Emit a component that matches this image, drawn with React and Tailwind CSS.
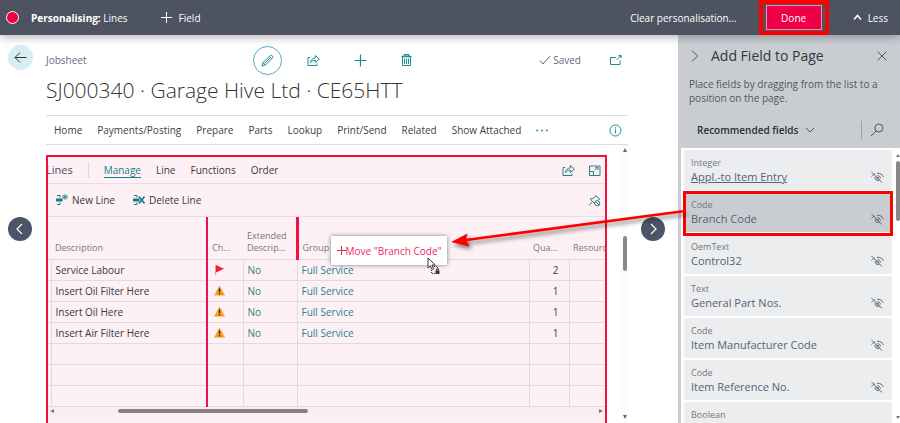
const FIELDS = [
  { type: 'Integer', name: 'Appl.-to Item Entry', underlined: true },
  { type: 'Code', name: 'Branch Code', selected: true },
  { type: 'OemText', name: 'Control32' },
  { type: 'Text', name: 'General Part Nos.' },
  { type: 'Code', name: 'Item Manufacturer Code' },
  { type: 'Code', name: 'Item Reference No.' },
  { type: 'Boolean', name: '' },
];

const ROWS = [
  { description: 'Service Labour', status: 'flag', extended: 'No', group: 'Full Service', qty: '2' },
  { description: 'Insert Oil Filter Here', status: 'warn', extended: 'No', group: 'Full Service', qty: '1' },
  { description: 'Insert Oil Here', status: 'warn', extended: 'No', group: 'Full Service', qty: '1' },
  { description: 'Insert Air Filter Here', status: 'warn', extended: 'No', group: 'Full Service', qty: '1' },
  {},
  {},
  {},
];

const MENU = ['Home', 'Payments/Posting', 'Prepare', 'Parts', 'Lookup', 'Print/Send', 'Related', 'Show Attached'];

function Icon({ size = 12, width = 1, className = '', children }) {
  return (
    <svg
      width={size}
      height={size}
      viewBox={`0 0 ${size} ${size}`}
      fill="none"
      stroke="currentColor"
      strokeWidth={width}
      className={`shrink-0 ${className}`}
      aria-hidden="true"
    >
      {children}
    </svg>
  );
}

const ShareIcon = () => (
  <Icon size={13}>
    <path d="M3 3.500H1v8h9V9.500" />
    <path d="M3.500 8.500C3.700 5.800 5.500 4.200 8.300 4V1.500l4 3.500-4 3.500V6.200C6.200 6.200 4.800 7 3.500 8.500z" />
  </Icon>
);

const HiddenIcon = () => (
  <Icon size={13} className="text-[#5f6a7b]">
    <path d="M0.500 5.500C2 3.600 3.500 3 4 2.800M6 2.300C9 2 11.500 3.500 12.500 6" />
    <path d="M0.500 1l10.500 10.500" />
    <path d="M4.500 5.500C3.700 7 4.200 9 6.300 9.500c1 .2 1.800-.1 2.500-.7M6.500 4.600c1.700-.1 3 1.200 2.800 3" />
    <circle cx="6.800" cy="7" r="0.900" />
  </Icon>
);

const PopOutIcon = () => (
  <Icon size={13}>
    <path d="M7 3.500H1.500v7h9.500V6.500" />
    <path d="M7.500 6l4-4" />
    <path d="M9 1h3.500v3.500z" fill="currentColor" stroke="none" />
  </Icon>
);

const ExpandIcon = () => (
  <Icon size={13}>
    <path d="M1.500 11.500v-9.500h10.500v9.500z" />
    <path d="M1.500 7.500h4v4M6.500 6l3.500-3M7.500 3.500h2.500v2.500" />
  </Icon>
);

const UnpinIcon = () => (
  <Icon size={13}>
    <path d="M7.500 1.500l4.500 4M8 2L5 4.500 2 5l5 5M11.500 5L10 6.500M4.500 7.500L1 11.500" />
    <circle cx="9.200" cy="9.300" r="2.600" />
    <path d="M7.500 7.500l3.500 3.500" />
  </Icon>
);

const RowMark = () => (
  <>
    <path d="M1 1.500h3v2M1 10.500h3v-2" />
    <path d="M0 4.500h6.500v3H0z" fill="currentColor" stroke="none" />
  </>
);

const NewLineIcon = () => (
  <Icon size={12}>
    <RowMark />
    <path d="M9 0v6M6.500 1l5 4M11.500 1l-5 4M6 3h6" strokeWidth="0.800" />
  </Icon>
);

const DeleteLineIcon = () => (
  <Icon size={12}>
    <RowMark />
    <path d="M6 2.500l5.500 7M11.500 2.500L6 9.500" strokeWidth="1.600" />
  </Icon>
);

const Status = ({ kind }) =>
  kind === 'flag' ? (
    <svg width="11" height="11" viewBox="0 0 11 11" className="block" role="img" aria-label="Flag">
      <path d="M1.500 1v10" stroke="#e99aa5" />
      <path d="M2 1l8 3.700L2 8.500z" fill="#f0232c" />
    </svg>
  ) : (
    <svg width="11" height="11" viewBox="0 0 11 11" className="block" role="img" aria-label="Warning">
      <path d="M5.500 0.500L11 10.500H0z" fill="#f9a01b" />
      <path d="M5.500 3.500v3.700M5.500 8v1.500" stroke="#3b2a20" strokeWidth="1.400" />
    </svg>
  );

function TopBar() {
  return (
    <header className="relative z-10 flex h-[35px] shrink-0 items-center bg-[#4d5360] pl-1.5 pr-3 text-white shadow-[0_2px_9px_rgba(0,0,0,0.3)]">
      <span className="h-[13px] w-[13px] rounded-full border border-white bg-[#ee0046]" />
      <p className="ml-3">
        <strong className="font-bold">Personalising:</strong> Lines
      </p>
      <button className="ml-8 flex items-center gap-1.5">
        <Icon size={13}>
          <path d="M6.500 1v11M1 6.500h11" />
        </Icon>
        Field
      </button>
      <button className="ml-auto">Clear personalisation...</button>
      <div className="ml-[22px] flex h-[35px] items-center border-4 border-[#fe0000] px-[3px]">
        <button className="h-[25px] w-14 border border-[#f58fb0] bg-[#ee0046]">Done</button>
      </div>
      <button className="ml-6 flex items-center gap-1.5">
        <Icon size={9} width={1.5}>
          <path d="M1 6.500l3.500-4 3.500 4" />
        </Icon>
        Less
      </button>
    </header>
  );
}

function RecordHeader() {
  return (
    <>
      <div className="relative flex h-[50px] items-center pr-1.5 text-[#5f6b80]">
        <span>Jobsheet</span>
        <div className="absolute left-[207px] flex items-center gap-[34px] text-[#1b8f96]">
          <button aria-label="Edit" className="-mr-[9px] grid h-[29px] w-[29px] place-items-center rounded-full border border-[#4fb0b8]">
            <Icon size={13}>
              <path d="M1 12l1-3.500L9.500 1.500c1-.8 3.200 1 2.200 2.200L4.500 11 1 12zM2 8.500L4.500 11M8.500 2.500l2.300 2.300M3.700 9.300l5.300-5.300" />
            </Icon>
          </button>
          <button aria-label="Share"><ShareIcon /></button>
          <button aria-label="New">
            <Icon size={13} width={1.2}>
              <path d="M6.500 0.500v12M0.500 6.500h12" />
            </Icon>
          </button>
          <button aria-label="Delete">
            <Icon size={12}>
              <path d="M0.500 2.500h10M3.500 2V0.700h4V2" strokeWidth="1.300" />
              <path d="M1.500 3v8.500h8V3" />
              <path d="M3.500 4.500v5.500M5.500 4.500v5.500M7.500 4.500v5.500" />
            </Icon>
          </button>
        </div>
        <span className="ml-auto flex items-center gap-0.5">
          <Icon size={12}>
            <path d="M1 6.500l3 3.500 7-8" />
          </Icon>
          Saved
        </span>
        <button aria-label="Open in new window" className="ml-7 text-[#1b8f96]"><PopOutIcon /></button>
      </div>
      <h1 className="h-[30px] whitespace-nowrap text-[21px] leading-[10px] font-light text-[#333]">
        SJ000340 · Garage Hive Ltd · CE65HTT
      </h1>
      <nav className="flex h-[30px] items-center gap-[15px] border-y border-[#dcdcdc] pl-2 pr-1.5 text-[#404040]">
        {MENU.map((label) => (
          <button key={label} className="whitespace-nowrap">{label}</button>
        ))}
        <button aria-label="More" className="text-[#1b8f96]">
          <svg width="12" height="3" viewBox="0 0 12 3" fill="currentColor" aria-hidden="true">
            <circle cx="1.200" cy="1.500" r="0.900" />
            <circle cx="6" cy="1.500" r="0.900" />
            <circle cx="10.800" cy="1.500" r="0.900" />
          </svg>
        </button>
        <button aria-label="Information" className="ml-auto text-[#1b8f96]">
          <Icon size={13}>
            <circle cx="6.500" cy="6.500" r="5.500" />
            <path d="M6.500 5.500v4M6.500 3.300v1.200" />
          </Icon>
        </button>
      </nav>
    </>
  );
}

function LinesTable() {
  return (
    <table className="w-full table-fixed border-collapse text-left">
      <colgroup>
        <col className="w-[3px]" />
        <col className="w-[156px]" />
        <col className="w-9" />
        <col className="w-[54px]" />
        <col />
        <col className="w-10" />
        <col className="w-9" />
      </colgroup>
      <thead>
        <tr className="h-[42px] align-bottom text-[9px] leading-3 whitespace-nowrap text-[#7b7580] *:pb-[5px] *:font-normal">
          <td />
          <th className="pl-1">Description</th>
          <th className="border-l-2 border-[#e8134f] pl-1">Ch...</th>
          <th className="pl-1">Extended<br />Descrip...</th>
          <th className="border-l-3 border-[#f3103f] pl-1">Group D</th>
          <th className="pl-1">Qua...</th>
          <th className="overflow-hidden pl-1">Resourc</th>
        </tr>
      </thead>
      <tbody>
        {ROWS.map((row, i) => (
          <tr key={i} className="h-[21px] border-y border-[#e6d9de] text-[#40363c] *:border-l *:border-[#e6d9de] *:py-0">
            <td className="border-l-0!" />
            <td className="pl-1">{row.description}</td>
            <td className="border-l-2! border-l-[#e8134f]! pl-1.5">{row.status && <Status kind={row.status} />}</td>
            <td className="pl-1 text-[#2b7f88]">{row.extended}</td>
            <td className="pl-1 text-[#2b7f88]">{row.group}</td>
            <td className="pr-2.5 text-right">{row.qty}</td>
            <td />
          </tr>
        ))}
      </tbody>
    </table>
  );
}

function LinesPart() {
  return (
    <section className="flex min-w-0 flex-1 flex-col overflow-hidden border-2 border-b-0 border-[#f3103f] bg-[#fef1f5] text-[#40363c]">
      <div className="flex h-[27px] shrink-0 items-center gap-[15px] border-b border-[#eadde2] pr-1">
        <h2 className="-ml-0.5 text-[11px] text-[#454f60]">Lines</h2>
        <span className="h-4 w-px bg-[#e0d3d9]" />
        <button className="border-b border-[#1b7f88] leading-[14px] text-[#1b7f88]">Manage</button>
        <button>Line</button>
        <button>Functions</button>
        <button>Order</button>
        <div className="ml-auto flex gap-[13px] text-[#2b7f88]">
          <button aria-label="Share lines"><ShareIcon /></button>
          <button aria-label="Expand lines"><ExpandIcon /></button>
        </div>
      </div>
      <div className="flex h-[33px] shrink-0 items-center gap-[18px] border-b border-[#eadde2] pl-2 pr-1">
        <button className="flex items-center gap-1">
          <span className="text-[#127a84]"><NewLineIcon /></span>New Line
        </button>
        <button className="flex items-center gap-1">
          <span className="text-[#127a84]"><DeleteLineIcon /></span>Delete Line
        </button>
        <button aria-label="Unpin" className="ml-auto text-[#2b7f88]"><UnpinIcon /></button>
      </div>
      <LinesTable />
      <div className="flex h-2 shrink-0 items-center justify-between bg-[#fbeef2] px-0.5">
        <span className="border-y-2 border-r-4 border-y-transparent border-r-[#7d7478]" />
        <span className="mr-auto ml-16 h-1 w-[190px] rounded-full bg-[#8c7f84]" />
        <span className="border-y-2 border-l-4 border-y-transparent border-l-[#7d7478]" />
      </div>
    </section>
  );
}

function FieldPane() {
  return (
    <aside className="flex w-[222px] shrink-0 flex-col border-l-3 border-[#c9cdd2] bg-[#c9cdd2] text-[#50565f]">
      <div className="flex h-[42px] shrink-0 items-center pl-2 pr-3">
        <button aria-label="Collapse pane">
          <Icon size={12}>
            <path d="M3 0.500L8.500 6 3 11.500" />
          </Icon>
        </button>
        <h2 className="ml-2.5 text-[14px] leading-5 text-[#33363b]">Add Field to Page</h2>
        <button aria-label="Close pane" className="ml-auto">
          <Icon size={12}>
            <path d="M1.500 1.500l9 9M10.500 1.500l-9 9" />
          </Icon>
        </button>
      </div>
      <p className="h-[38px] pl-2 pr-4 text-[10px] leading-[14px] whitespace-nowrap">
        Place fields by dragging from the list to a<br />position on the page.
      </p>
      <div className="flex h-[33px] shrink-0 items-center pl-4 pr-4 pb-1">
        <div className="relative flex items-center">
          <select
            aria-label="Field filter"
            className="appearance-none bg-transparent pr-4 font-semibold text-[#2b2d31] outline-none"
          >
            <option>Recommended fields</option>
          </select>
          <Icon size={10} className="pointer-events-none absolute right-0">
            <path d="M1 3l4 4 4-4" />
          </Icon>
        </div>
        <span className="ml-auto h-[18px] w-px bg-[#9a9fa8]" />
        <button aria-label="Search fields" className="ml-2">
          <Icon size={14}>
            <circle cx="8.800" cy="5" r="4" />
            <path d="M6 8L1 13" />
          </Icon>
        </button>
      </div>
      <div className="flex min-h-0 flex-1 justify-between overflow-hidden bg-white pt-0.5">
        <ul className="ml-[3px] flex flex-1 flex-col gap-0.5">
          {FIELDS.map((field) => (
            <li
              key={field.type + field.name}
              className={
                field.selected
                  ? 'relative h-10 bg-[#c9cdd2] after:pointer-events-none after:absolute after:-inset-x-px after:-top-px after:-bottom-1 after:border-3 after:border-[#fe0000]'
                  : 'h-10 bg-[#ebedef]'
              }
            >
              <button className="flex h-full w-full items-end justify-between pt-1.5 pr-2 pb-1.5 pl-[7px] text-left">
                <span className="flex h-full flex-col">
                  <span className="text-[9px] leading-[13px] text-[#72777f]">{field.type}</span>
                  <span className={field.underlined ? 'text-[11px] leading-4 text-[#566173] underline' : 'text-[11px] leading-4 text-[#566173]'}>
                    {field.name}
                  </span>
                </span>
                {field.name && <HiddenIcon />}
              </button>
            </li>
          ))}
        </ul>
        <div className="ml-1 flex w-1 shrink-0 flex-col items-center justify-between pt-1 pb-1">
          <span className="border-x-2 border-b-3 border-x-transparent border-b-[#777]" />
          <span className="mt-1 mb-auto h-[60px] w-1 rounded-full bg-[#888]" />
          <span className="border-x-2 border-t-3 border-x-transparent border-t-[#777]" />
        </div>
      </div>
    </aside>
  );
}

function DragHint() {
  return (
    <div className="absolute top-[236px] right-[453px] z-20 flex h-[29px] w-[116px] items-center justify-center bg-white text-[#f0265c] shadow-[0_0_4px_rgba(0,0,0,0.5)]">
      <Icon size={9}>
        <path d="M4.500 0v9M0 4.500h9" />
      </Icon>
      <span className="whitespace-nowrap">Move "Branch Code"</span>
      <svg width="13" height="18" viewBox="0 0 13 18" className="absolute top-[21px] right-[7px]" aria-hidden="true">
        <path d="M1 1v10l2.400-2.300L5 12.500l1.600-.7L5 8h3.300z" fill="#fff" stroke="#333" />
        <path d="M4.500 13v3.500h4M7 9.500h3.500v3" fill="none" stroke="#333" strokeDasharray="1 1" />
        <path d="M8.500 13.500h4V17h-4z" fill="#333" />
        <path d="M9.500 13.500V12h2v1.500" fill="none" stroke="#333" />
      </svg>
    </div>
  );
}

function DragArrow() {
  return (
    <svg
      width="240"
      height="44"
      viewBox="0 0 240 44"
      className="pointer-events-none absolute top-[207px] right-[212px] z-20 drop-shadow-[2px_3px_2px_rgba(0,0,0,0.5)]"
      aria-hidden="true"
    >
      <path d="M237 4L18 33" stroke="#fe0000" strokeWidth="2.500" />
      <path d="M3 35L19.500 26.500L18 33L21.500 39.500z" fill="#fe0000" />
    </svg>
  );
}

const ROUND = 'grid h-6 w-6 place-items-center rounded-full bg-[#4a5568] text-white';

export default function App() {
  return (
    <div className="relative flex h-screen flex-col overflow-hidden bg-white font-['Open_Sans','Noto_Sans',sans-serif] text-[10px] leading-4">
      <TopBar />
      <div className="flex min-h-0 flex-1">
        <div className="flex w-[46px] shrink-0 flex-col pl-2 pt-2.5">
          <button aria-label="Back" className="mb-[147px] grid h-[25px] w-[25px] place-items-center rounded-full bg-[#d5eff0] text-[#333]">
            <Icon size={13}>
              <path d="M12.500 6.500H1M6 1.500l-5 5 5 5" />
            </Icon>
          </button>
          <button aria-label="Previous record" className={ROUND}>
            <Icon size={12} width={1.2}>
              <path d="M8 1L3 6l5 5" />
            </Icon>
          </button>
        </div>
        <main className="flex min-w-0 flex-1 flex-col">
          <RecordHeader />
          <div className="flex min-h-0 flex-1">
            <div className="flex min-w-0 flex-1 pt-2.5">
              <LinesPart />
            </div>
            <div className="ml-3.5 flex w-[7px] flex-col items-center justify-between bg-[#fcfcfc] pt-[3px] pb-1">
              <span className="border-x-2 border-b-4 border-x-transparent border-b-[#666]" />
              <span className="mt-[84px] mb-auto h-[35px] w-1 rounded-full bg-[#888]" />
              <span className="border-x-2 border-t-4 border-x-transparent border-t-[#666]" />
            </div>
          </div>
        </main>
        <div className="w-[50px] shrink-0 pt-[182px] pl-[13px]">
          <button aria-label="Next record" className={ROUND}>
            <Icon size={12} width={1.2}>
              <path d="M4 1l5 5-5 5" />
            </Icon>
          </button>
        </div>
        <FieldPane />
      </div>
      <DragHint />
      <DragArrow />
    </div>
  );
}
